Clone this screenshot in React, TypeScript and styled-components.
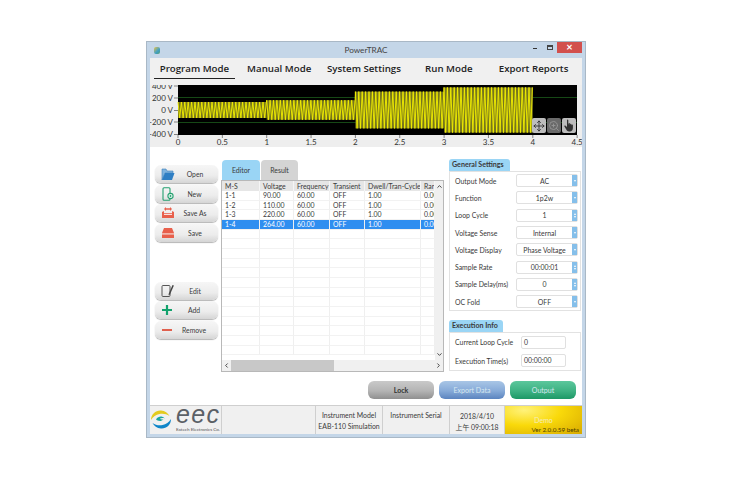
import styled, { createGlobalStyle } from "styled-components";
import { Move, ZoomIn, ChevronUp, ChevronDown, ChevronLeft, ChevronRight } from "lucide-react";

const GlobalStyle = createGlobalStyle`
  html, body {
    margin: 0;
    padding: 0;
    background: #ffffff;
  }
  body {
    font-family: Lato, "Noto Sans CJK TC", "Liberation Sans", sans-serif;
    color: #3a3a3a;
  }
`;

const modes = ["Program Mode", "Manual Mode", "System Settings", "Run Mode", "Export Reports"];
const tableHead = ["M-S", "Voltage", "Frequency", "Transient", "Dwell/Tran-Cycle", "Rar"];
const tableRows = [
  ["1-1", "90.00", "60.00", "OFF", "1.00", "0.00"],
  ["1-2", "110.00", "60.00", "OFF", "1.00", "0.00"],
  ["1-3", "220.00", "60.00", "OFF", "1.00", "0.00"],
  ["1-4", "264.00", "60.00", "OFF", "1.00", "0.00"],
];
const settings = [
  { label: "Output Mode", value: "AC", spin: false },
  { label: "Function", value: "1p2w", spin: false },
  { label: "Loop Cycle", value: "1", spin: true },
  { label: "Voltage Sense", value: "Internal", spin: false },
  { label: "Voltage Display", value: "Phase Voltage", spin: false },
  { label: "Sample Rate", value: "00:00:01", spin: true },
  { label: "Sample Delay(ms)", value: "0", spin: true },
  { label: "OC Fold", value: "OFF", spin: false },
];

// plot area is 399 x 50 inside the chart, 88.7px per second
const segments = [
  { from: 0, to: 88.7, amp: 8 },
  { from: 88.7, to: 177.4, amp: 9.8 },
  { from: 177.4, to: 266, amp: 18.4 },
  { from: 266, to: 354.8, amp: 22.6 },
];

function wavePoints() {
  const pts: string[] = [];
  segments.forEach((s) => {
    let top = true;
    for (let x = s.from; x < s.to; x += 1.7) {
      const y = 25 + (top ? -s.amp : s.amp);
      pts.push(`${(x + 28).toFixed(1)},${y.toFixed(1)}`);
      top = !top;
    }
  });
  return pts.join(" ");
}

function WaveChart() {
  return (
    <svg width="432" height="62" viewBox="0 0 432 62">
      <rect x="28" y="0" width="399" height="50" fill="#000000" />
      {[12.5, 37.5].map((y) => (
        <line key={y} x1="28" x2="427" y1={y} y2={y} stroke="#1c5a1c" strokeWidth="0.8" />
      ))}
      {segments.map((s) => (
        <rect key={s.from} x={s.from + 28} y={25 - s.amp} width={s.to - s.from} height={s.amp * 2} fill="#77761c" />
      ))}
      <polyline points={wavePoints()} fill="none" stroke="#f4f000" strokeWidth="0.9" />
      {[
        ["400 V", 1],
        ["200 V", 13],
        ["0 V", 25.5],
        ["-200 V", 37],
        ["-400 V", 49.5],
      ].map(([t, y]) => (
        <g key={t}>
          <text x="23" y={Number(y) + 2.8} fontSize="8" textAnchor="end" fill="#333" fontFamily="Lato">
            {t}
          </text>
          <line x1="24" x2="28" y1={y} y2={y} stroke="#555" strokeWidth="0.7" />
        </g>
      ))}
      {["0", "0.5", "1", "1.5", "2", "2.5", "3", "3.5", "4", "4.5"].map((t, i) => (
        <g key={t}>
          <line x1={28 + i * 44.35} x2={28 + i * 44.35} y1="50" y2="53" stroke="#555" strokeWidth="0.7" />
          <text x={28 + i * 44.35} y="60" fontSize="8" textAnchor="middle" fill="#333" fontFamily="Lato">
            {t}
          </text>
        </g>
      ))}
    </svg>
  );
}

function HandIcon() {
  return (
    <svg width="12" height="13" viewBox="0 0 12 13">
      <path
        d="M4 1.2c0-.9 1.3-.9 1.3 0V6l.3-1.500c.2-.8 1.3-.7 1.300.1V6.300l.3-1.200c.2-.7 1.200-.6 1.200.2v1.200l.3-.7c.3-.6 1.200-.4 1.200.3V9c0 2-1.200 3.500-3 3.500H6c-1.300 0-2-.6-2.600-1.700L1.400 7.500c-.4-.8.6-1.400 1.200-.8L4 8z"
        fill="#333333"
      />
    </svg>
  );
}

function OpenIcon() {
  return (
    <svg width="14" height="13" viewBox="0 0 14 13">
      <path d="M1 1h4l1 2h6v2H4L1 12z" fill="#7db3df" stroke="#3f80b8" strokeWidth="0.6" />
      <path d="M4 5h9.5L11 12H1z" fill="#2f7fc4" />
    </svg>
  );
}

function NewIcon() {
  return (
    <svg width="13" height="14" viewBox="0 0 13 14">
      <rect x="2" y="0.8" width="7" height="12.4" rx="1" fill="none" stroke="#23a06f" strokeWidth="1.1" />
      <circle cx="9.5" cy="9" r="2.6" fill="#ffffff" stroke="#23a06f" strokeWidth="1.1" />
      <path d="M9.5 7.8v2.4M8.3 9h2.4" stroke="#23a06f" strokeWidth="0.8" />
    </svg>
  );
}

function SaveAsIcon() {
  return (
    <svg width="14" height="12" viewBox="0 0 14 12">
      <path d="M1 5l2-1v2h8V4l2 1v6H1z" fill="#e8604c" />
      <path d="M3 2l2-2v1.2h4V0l2 2-2 2V2.8H5V4z" fill="#e8604c" />
      <rect x="3" y="6.8" width="8" height="1" fill="#ffffff" />
    </svg>
  );
}

function SaveIcon() {
  return (
    <svg width="14" height="12" viewBox="0 0 14 12">
      <path d="M3 1h8l2 5H1z" fill="#e8604c" />
      <rect x="1" y="6" width="12" height="1.2" fill="#f4b5aa" />
      <rect x="1" y="7.5" width="12" height="3.5" fill="#e8604c" />
    </svg>
  );
}

function EditIcon() {
  return (
    <svg width="14" height="14" viewBox="0 0 14 14">
      <rect x="1" y="1.5" width="8" height="11" rx="1" fill="none" stroke="#555" strokeWidth="1" />
      <path d="M11.5 1l1.4.6L9 10.5l-1.4.8.1-1.6z" fill="#444" />
    </svg>
  );
}

function AddIcon() {
  return (
    <svg width="12" height="12" viewBox="0 0 12 12">
      <path d="M6 1v10M1 6h10" stroke="#12a26c" strokeWidth="2.2" />
    </svg>
  );
}

function RemoveIcon() {
  return (
    <svg width="12" height="12" viewBox="0 0 12 12">
      <path d="M1 6h10" stroke="#e0604e" strokeWidth="2" />
    </svg>
  );
}

function EecLogo() {
  return (
    <svg width="71" height="28" viewBox="0 0 71 28">
      <path d="M1 14C1 8 6 4 11 4.5c4 .3 7 2.5 8.5 5.5-3-2-6.5-2.800-10-2-3.500.8-6.500 2.700-8.500 6z" fill="#e4cb1e" />
      <path d="M21 13c0 6-5 10-10 9.500-4-.3-7-2.500-8.500-5.500 3 2 6.500 2.800 10 2 3.500-.8 6.500-2.700 8.500-6z" fill="#0f86c9" />
      <path d="M6 13.500c1.500-2.300 3.800-3.200 6-2.800 1.400.3 2.300.9 2.800 1.800-1.800-.7-3.600-.5-5 .2 1 .7 2.300.9 3.700.5-1.400 1.600-3.200 2-5 1.600-1-.3-2-.7-2.500-1.300z" fill="#18a7a0" />
      <text x="26" y="17" fontSize="25" fontStyle="italic" fontFamily="Liberation Sans" fill="#5b6066" textLength="43" lengthAdjust="spacing">
        eec
      </text>
      <text x="26" y="24.5" fontSize="4.6" fontFamily="Lato" fill="#555" textLength="44">
        Eatech Electronics Co.
      </text>
    </svg>
  );
}

function Spinner({ spin }: { spin: boolean }) {
  return (
    <SpinBox>
      {spin ? <SpinUp /> : null}
      <SpinDown />
    </SpinBox>
  );
}

export default function App() {
  return (
    <Page>
      <GlobalStyle />
      <Window>
        <TitleBar>
          <AppIcon />
          <Title>PowerTRAC</Title>
          <WinButtons>
            <MinGlyph />
            <MaxGlyph />
            <CloseButton>×</CloseButton>
          </WinButtons>
        </TitleBar>
        <Inner>
          <ModeBar>
            {modes.map((m, i) => (
              <ModeTab key={m} $active={i === 0}>
                {m}
              </ModeTab>
            ))}
          </ModeBar>
          <ChartArea>
            <WaveChart />
            <ChartTools>
              <ChartTool $dim={false}>
                <Move size={12} strokeWidth={1.8} />
              </ChartTool>
              <ChartTool $dim={true}>
                <ZoomIn size={12} strokeWidth={1.8} />
              </ChartTool>
              <ChartTool $dim={false}>
                <HandIcon />
              </ChartTool>
            </ChartTools>
          </ChartArea>
          <Main>
            <Upper>
              <SideColumn>
                <SideGroup>
                  <SideButton><OpenIcon /><span>Open</span></SideButton>
                  <SideButton><NewIcon /><span>New</span></SideButton>
                  <SideButton><SaveAsIcon /><span>Save As</span></SideButton>
                  <SideButton><SaveIcon /><span>Save</span></SideButton>
                </SideGroup>
                <SideGroup>
                  <SideButton><EditIcon /><span>Edit</span></SideButton>
                  <SideButton><AddIcon /><span>Add</span></SideButton>
                  <SideButton><RemoveIcon /><span>Remove</span></SideButton>
                </SideGroup>
              </SideColumn>
              <TableColumn>
                <TabRow>
                  <TableTab $active>Editor</TableTab>
                  <TableTab $active={false}>Result</TableTab>
                </TabRow>
                <TableFrame>
                  <TableBody>
                    <GridRow $kind="head">
                      {tableHead.map((h) => (
                        <HeadCell key={h}>{h}</HeadCell>
                      ))}
                    </GridRow>
                    {tableRows.map((r, i) => (
                      <GridRow key={r[0]} $kind={i === 3 ? "selected" : "plain"}>
                        {r.map((c, j) => (
                          <Cell key={j}>{c}</Cell>
                        ))}
                      </GridRow>
                    ))}
                    {Array.from({ length: 13 }).map((_, i) => (
                      <GridRow key={i} $kind="plain">
                        {tableHead.map((h) => (
                          <Cell key={h} />
                        ))}
                      </GridRow>
                    ))}
                  </TableBody>
                  <VScroll>
                    <ChevronUp size={7} strokeWidth={3} />
                    <ChevronDown size={7} strokeWidth={3} />
                  </VScroll>
                  <HScroll>
                    <ChevronLeft size={7} strokeWidth={3} />
                    <HThumb />
                    <ChevronRight size={7} strokeWidth={3} />
                  </HScroll>
                </TableFrame>
              </TableColumn>
              <SettingsColumn>
                <GroupTab $width={61}>General Settings</GroupTab>
                <SettingsBox>
                  {settings.map((s) => (
                    <SettingRow key={s.label}>
                      <SettingLabel>{s.label}</SettingLabel>
                      <SettingField>
                        <FieldValue>{s.value}</FieldValue>
                        <Spinner spin={s.spin} />
                      </SettingField>
                    </SettingRow>
                  ))}
                </SettingsBox>
                <GroupTab $width={54}>Execution Info</GroupTab>
                <ExecBox>
                  <ExecRow>
                    <SettingLabel>Current Loop Cycle</SettingLabel>
                    <ExecField>0</ExecField>
                  </ExecRow>
                  <ExecRow>
                    <SettingLabel>Execution Time(s)</SettingLabel>
                    <ExecField>00:00:00</ExecField>
                  </ExecRow>
                </ExecBox>
              </SettingsColumn>
            </Upper>
            <Actions>
              <ActionButton $tone="lock">Lock</ActionButton>
              <ActionButton $tone="export">Export Data</ActionButton>
              <ActionButton $tone="output">Output</ActionButton>
            </Actions>
          </Main>
          <StatusBar>
            <LogoCell>
              <EecLogo />
            </LogoCell>
            <StatusCell $width={93} />
            <StatusCell $width={66}>
              <StatusLine>Instrument Model</StatusLine>
              <StatusLine>EAB-110 Simulation</StatusLine>
            </StatusCell>
            <StatusCell $width={66}>
              <StatusLine>Instrument Serial</StatusLine>
              <StatusLine>&nbsp;</StatusLine>
            </StatusCell>
            <StatusCell $width={54}>
              <DateLine>2018/4/10</DateLine>
              <DateLine>上午 09:00:18</DateLine>
            </StatusCell>
            <DemoCell>
              <DemoTitle>Demo</DemoTitle>
              <DemoVersion>Ver 2.0.0.59 beta</DemoVersion>
            </DemoCell>
          </StatusBar>
        </Inner>
      </Window>
    </Page>
  );
}

const Page = styled.div`
  width: 732px;
  height: 480px;
  padding: 41px 0 0 146px;
  box-sizing: border-box;
  overflow: hidden;
`;

const Window = styled.div`
  width: 440px;
  height: 397px;
  background: #c4d6e8;
  border: 1px solid #a9b8c6;
  box-sizing: border-box;
  padding: 0 3px 3px 3px;
  display: flex;
  flex-direction: column;
`;

const TitleBar = styled.div`
  height: 16px;
  display: flex;
  align-items: center;
  position: relative;
  flex: none;
`;

const AppIcon = styled.div`
  width: 6px;
  height: 7px;
  margin-left: 4px;
  border-radius: 2px;
  background: linear-gradient(135deg, #e8c24a 0%, #3f9fc4 60%, #5aa06e 100%);
`;

const Title = styled.div`
  position: absolute;
  left: 0;
  right: 0;
  text-align: center;
  font-size: 8.2px;
  color: #444;
`;

const WinButtons = styled.div`
  margin-left: auto;
  display: flex;
  align-items: center;
  align-self: flex-start;
  height: 11px;
  position: relative;
`;

const MinGlyph = styled.div`
  width: 4px;
  height: 1px;
  background: #333;
  margin-right: 10px;
  margin-top: 2px;
`;

const MaxGlyph = styled.div`
  width: 6px;
  height: 5px;
  box-sizing: border-box;
  border: 1px solid #444;
  border-top-width: 2px;
  margin-right: 4px;
`;

const CloseButton = styled.div`
  width: 25px;
  height: 11px;
  background: #d2504d;
  color: #fff;
  font-size: 11px;
  font-weight: 700;
  line-height: 10px;
  text-align: center;
`;

const Inner = styled.div`
  flex: 1;
  display: flex;
  flex-direction: column;
  background: #ffffff;
  min-height: 0;
`;

const ModeBar = styled.div`
  height: 27px;
  flex: none;
  background: #f0f0f0;
  display: grid;
  grid-template-columns: repeat(5, 84.8px);
  padding-left: 2px;
  box-sizing: border-box;
`;

const ModeTab = styled.div<{ $active: boolean }>`
  height: 21px;
  margin: 0 2px;
  padding-top: 4px;
  box-sizing: border-box;
  font-family: "Open Sans", sans-serif;
  font-size: 9.7px;
  font-weight: 600;
  line-height: 14px;
  text-align: center;
  white-space: nowrap;
  color: #222;
  border-bottom: ${(p) => (p.$active ? "1.5px solid #222" : "none")};
`;

const ChartArea = styled.div`
  position: relative;
  height: 62px;
  flex: none;
  background: #eeeeee;
  svg {
    display: block;
  }
`;

const ChartTools = styled.div`
  position: absolute;
  right: 6px;
  top: 33px;
  display: flex;
  gap: 1px;
  svg {
    display: block;
  }
`;

const ChartTool = styled.div<{ $dim: boolean }>`
  width: 14px;
  height: 15px;
  border-radius: 2px;
  background: ${(p) => (p.$dim ? "#6a6a6a" : "#bdbdbd")};
  color: ${(p) => (p.$dim ? "#969696" : "#333")};
  display: flex;
  align-items: center;
  justify-content: center;
`;

const Main = styled.div`
  height: 258px;
  flex: none;
  display: flex;
  flex-direction: column;
  background: #ffffff;
`;

const Upper = styled.div`
  height: 225px;
  flex: none;
  display: flex;
  padding-left: 5px;
`;

const SideColumn = styled.div`
  width: 63px;
  padding-top: 18px;
  display: flex;
  flex-direction: column;
  gap: 40px;
  flex: none;
`;

const SideGroup = styled.div`
  display: flex;
  flex-direction: column;
  gap: 1.5px;
`;

const SideButton = styled.div`
  height: 18px;
  box-sizing: border-box;
  border-radius: 6px;
  background: linear-gradient(#f6f6f6 0%, #ececec 60%, #d5d5d5 100%);
  box-shadow: 0 1px 1px #b5b5b5;
  display: flex;
  align-items: center;
  padding-left: 6px;
  font-size: 6.8px;
  color: #3a3a3a;
  svg {
    flex: none;
  }
  span {
    flex: 1;
    text-align: center;
    padding-right: 3px;
  }
`;

const TableColumn = styled.div`
  width: 223px;
  margin-left: 3px;
  padding-top: 13px;
  flex: none;
  display: flex;
  flex-direction: column;
`;

const TabRow = styled.div`
  height: 20px;
  display: flex;
  gap: 1px;
  padding-left: 1px;
  flex: none;
`;

const TableTab = styled.div<{ $active: boolean }>`
  width: ${(p) => (p.$active ? 38 : 37)}px;
  border-radius: 4px 4px 0 0;
  background: ${(p) => (p.$active ? "#9ad5f5" : "#d4d4d4")};
  font-size: 6.9px;
  line-height: 20px;
  text-align: center;
  color: #3a3a3a;
`;

const TableFrame = styled.div`
  height: 192px;
  box-sizing: border-box;
  border: 1px solid #b8b8b8;
  display: grid;
  grid-template-columns: 1fr 8px;
  grid-template-rows: 1fr 11px;
  overflow: hidden;
`;

const TableBody = styled.div`
  overflow: hidden;
  min-width: 0;
`;

const GridRow = styled.div<{ $kind: "head" | "plain" | "selected" }>`
  display: grid;
  grid-template-columns: 38px 34px 36px 35px 56px 14px;
  height: ${(p) => (p.$kind === "head" ? 10 : 9.67)}px;
  overflow: hidden;
  background: ${(p) => (p.$kind === "head" ? "#e6e6e6" : p.$kind === "selected" ? "#2f8ef0" : "#ffffff")};
  color: ${(p) => (p.$kind === "selected" ? "#ffffff" : "#3a3a3a")};
`;

const HeadCell = styled.div`
  font-size: 6.9px;
  line-height: 10px;
  padding-left: 3px;
  white-space: nowrap;
  overflow: hidden;
  border-right: 1px solid #f5f5f5;
`;

const Cell = styled.div`
  font-size: 6.9px;
  line-height: 9.5px;
  padding-left: 3px;
  white-space: nowrap;
  overflow: hidden;
  border-right: 1px solid #efefef;
  border-bottom: 1px solid #f2f2f2;
`;

const VScroll = styled.div`
  background: #f0f0f0;
  display: flex;
  flex-direction: column;
  justify-content: space-between;
  align-items: center;
  padding: 2px 0;
  color: #333;
`;

const HScroll = styled.div`
  grid-column: 1 / span 2;
  background: #f0f0f0;
  display: flex;
  align-items: center;
  padding: 0 1px;
  color: #333;
`;

const HThumb = styled.div`
  width: 103px;
  height: 100%;
  margin: 0 auto 0 1px;
  background: #c8c8c8;
`;

const SettingsColumn = styled.div`
  width: 132px;
  margin-left: 5px;
  padding-top: 12px;
  flex: none;
  display: flex;
  flex-direction: column;
`;

const GroupTab = styled.div<{ $width: number }>`
  width: ${(p) => p.$width}px;
  height: 12px;
  flex: none;
  border-radius: 3px 3px 0 0;
  background: #9ad5f5;
  font-size: 7.1px;
  font-weight: 700;
  line-height: 12px;
  padding-left: 3px;
  box-sizing: border-box;
  white-space: nowrap;
  color: #3a3a3a;
`;

const SettingsBox = styled.div`
  height: 140px;
  flex: none;
  margin-bottom: 9px;
  box-sizing: border-box;
  border: 1px solid #e2e2e2;
  padding: 0 2px 0 5px;
  display: flex;
  flex-direction: column;
`;

const SettingRow = styled.div`
  height: 17.3px;
  flex: none;
  display: flex;
  align-items: center;
  justify-content: space-between;
`;

const SettingLabel = styled.div`
  font-size: 6.9px;
  color: #3a3a3a;
  white-space: nowrap;
`;

const SettingField = styled.div`
  width: 62px;
  height: 13px;
  box-sizing: border-box;
  border: 1px solid #e0e0e0;
  border-radius: 2px;
  display: flex;
  align-items: center;
  background: #fff;
`;

const FieldValue = styled.div`
  flex: 1;
  text-align: center;
  font-size: 6.9px;
  color: #3a3a3a;
  white-space: nowrap;
`;

const SpinBox = styled.div`
  width: 5px;
  height: 100%;
  background: #85bfea;
  display: flex;
  flex-direction: column;
  align-items: center;
  justify-content: center;
  gap: 1px;
`;

const SpinUp = styled.div`
  width: 0;
  height: 0;
  border-left: 1.5px solid transparent;
  border-right: 1.5px solid transparent;
  border-bottom: 2px solid #ffffff;
`;

const SpinDown = styled.div`
  width: 0;
  height: 0;
  border-left: 1.5px solid transparent;
  border-right: 1.5px solid transparent;
  border-top: 2px solid #ffffff;
`;

const ExecBox = styled.div`
  height: 39px;
  flex: none;
  box-sizing: border-box;
  border: 1px solid #e2e2e2;
  padding: 0 14px 0 5px;
  display: flex;
  flex-direction: column;
  justify-content: space-around;
`;

const ExecRow = styled.div`
  display: flex;
  align-items: center;
  justify-content: space-between;
`;

const ExecField = styled.div`
  width: 45px;
  height: 13px;
  box-sizing: border-box;
  border: 1px solid #e0e0e0;
  border-radius: 2px;
  font-size: 6.9px;
  line-height: 11px;
  padding-left: 2px;
  color: #3a3a3a;
`;

const toneBackground = {
  lock: "linear-gradient(#c9c9c9 0%, #b4b4b4 55%, #8f8f8f 100%)",
  export: "linear-gradient(#a9c6e6 0%, #86aad8 55%, #5b84bf 100%)",
  output: "linear-gradient(#5cc79c 0%, #3eb283 55%, #1d9866 100%)",
};

const Actions = styled.div`
  margin-top: 9px;
  padding-right: 6px;
  display: flex;
  justify-content: flex-end;
  gap: 5px;
`;

const ActionButton = styled.div<{ $tone: "lock" | "export" | "output" }>`
  width: 66px;
  height: 18px;
  border-radius: 6px;
  background: ${(p) => toneBackground[p.$tone]};
  font-size: 7px;
  line-height: 18px;
  text-align: center;
  font-weight: ${(p) => (p.$tone === "lock" ? 700 : 400)};
  color: ${(p) => (p.$tone === "lock" ? "#333" : "#d8e8f0")};
`;

const StatusBar = styled.div`
  flex: 1;
  display: flex;
  gap: 1px;
  background: #cfcfcf;
  padding-top: 1px;
  min-height: 0;
`;

const LogoCell = styled.div`
  width: 71px;
  flex: none;
  background: #f0f0f0;
  display: flex;
  align-items: center;
  overflow: hidden;
`;

const StatusCell = styled.div<{ $width: number }>`
  width: ${(p) => p.$width}px;
  flex: none;
  background: #f0f0f0;
  display: flex;
  flex-direction: column;
  align-items: center;
  justify-content: center;
  gap: 1px;
`;

const StatusLine = styled.div`
  font-size: 6.9px;
  line-height: 10px;
  color: #3a3a3a;
  white-space: nowrap;
`;

const DateLine = styled(StatusLine)`
  position: relative;
  top: 1px;
`;

const DemoCell = styled.div`
  flex: 1;
  background: radial-gradient(ellipse at 25% 15%, #fff27a 0%, #f9d90a 45%, #d6a800 100%);
  display: flex;
  flex-direction: column;
  align-items: center;
  padding-top: 9px;
  box-sizing: border-box;
`;

const DemoTitle = styled.div`
  font-size: 6.9px;
  line-height: 10px;
  color: #f4ecc0;
`;

const DemoVersion = styled.div`
  align-self: flex-end;
  padding-right: 3px;
  font-size: 6.3px;
  line-height: 9px;
  color: #4a3c00;
  white-space: nowrap;
`;
